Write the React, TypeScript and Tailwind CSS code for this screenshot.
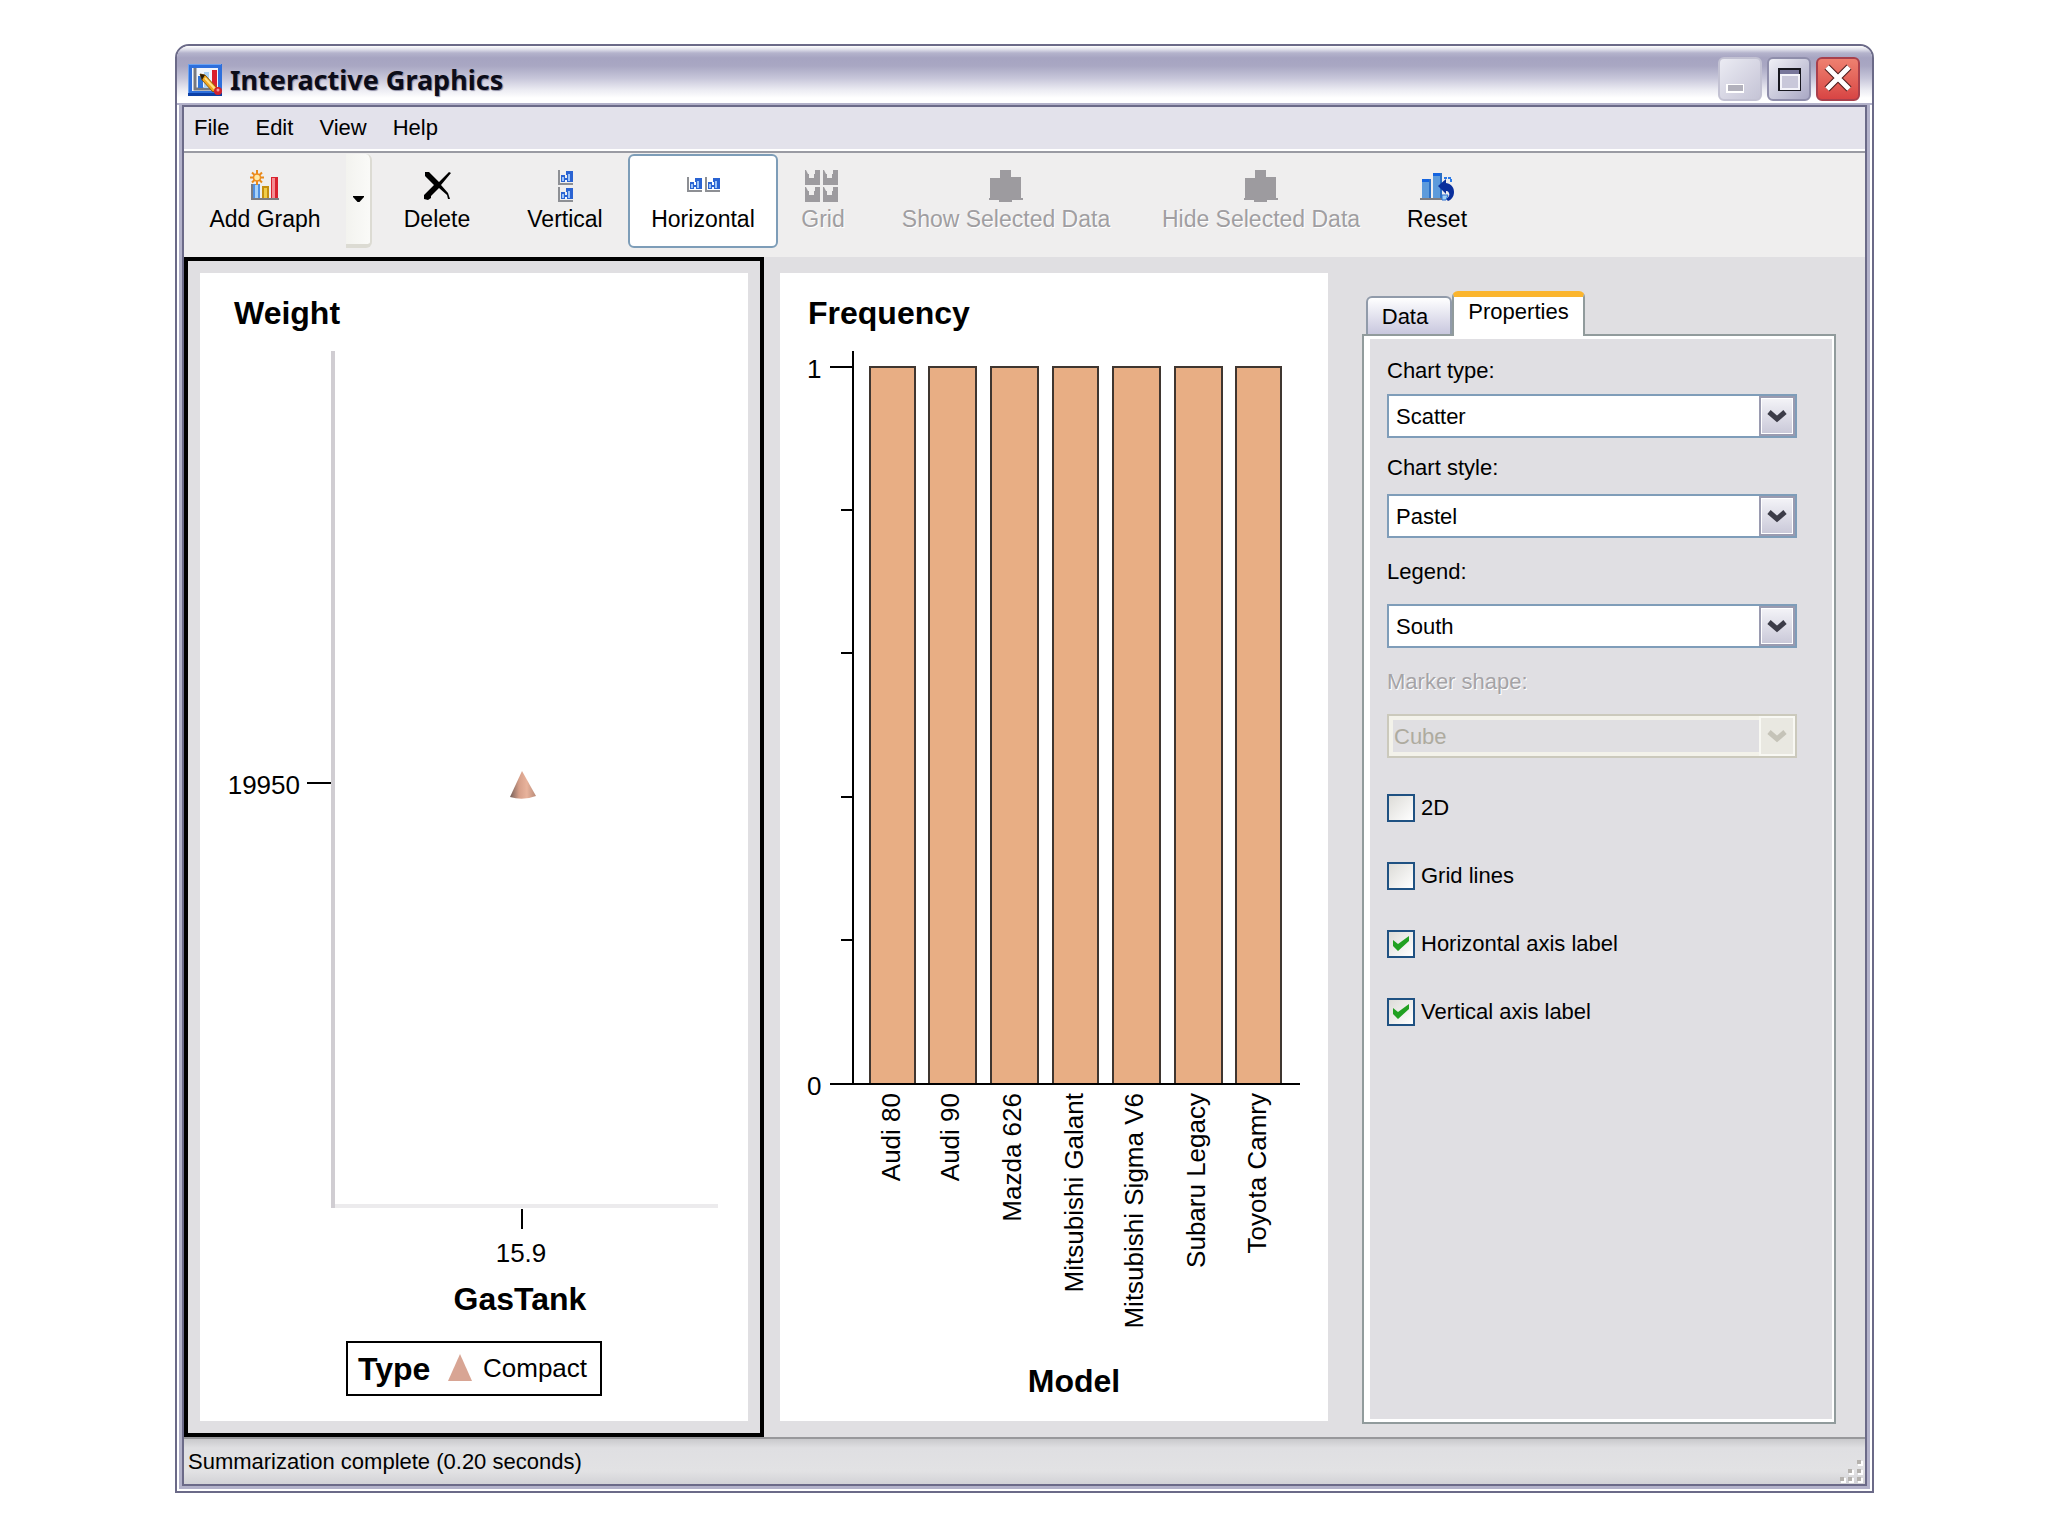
import { useState, type ReactNode } from "react";

const carModels = [
    { name: "Audi 80", x: 89, width: 46 },
    { name: "Audi 90", x: 148, width: 48 },
    { name: "Mazda 626", x: 210, width: 48 },
    { name: "Mitsubishi Galant", x: 272, width: 46 },
    { name: "Mitsubishi Sigma V6", x: 332, width: 48 },
    { name: "Subaru Legacy", x: 394, width: 48 },
    { name: "Toyota Camry", x: 455, width: 46 },
];

/* ---------- icons ---------- */

const AppIcon = () => (
    <svg width="34" height="32" viewBox="0 0 34 32" aria-hidden="true">
        <rect width="34" height="32" fill="#2e6fdc" />
        <path d="M0 31V0H33" fill="none" stroke="#6aa2f2" strokeWidth="2" />
        <path d="M0 31H34" stroke="#0b3fa6" strokeWidth="4" />
        <rect x="4" y="4" width="26" height="23" fill="#f2f6fc" />
        <path d="M7 4V25H28" fill="none" stroke="#77797f" strokeWidth="3" />
        <rect x="10" y="12" width="5" height="12" fill="#2f74d8" />
        <rect x="16" y="8" width="5" height="16" fill="#a9d0f5" />
        <rect x="24" y="6" width="5" height="18" fill="#d9202d" />
        <path d="M12 10l5 1 12 13-4 4-11-12z" fill="#f2a81d" stroke="#8a5a10" strokeWidth="1" />
        <path d="M12 10l5 1-3 5z" fill="#2a1c0c" />
        <path d="M17 14l10 11" stroke="#ffe08a" strokeWidth="2" />
        <circle cx="30" cy="27" r="4" fill="#d3222c" />
        <circle cx="30" cy="26" r="1.5" fill="#f59aa0" />
    </svg>
);

const AddGraphIcon = () => (
    <svg width="30" height="32" viewBox="0 0 30 32" aria-hidden="true">
        <rect x="3" y="14" width="7" height="15" fill="#4f8fe0" />
        <rect x="5" y="15" width="3" height="14" fill="#a8d2f8" />
        <rect x="12" y="16" width="7" height="13" fill="#c58f10" />
        <rect x="14" y="18" width="3" height="11" fill="#f0cd4a" />
        <rect x="21" y="7" width="7" height="22" fill="#d9232f" />
        <rect x="22" y="8" width="3" height="20" fill="#f58c92" />
        <path d="M2 14V29H29" fill="none" stroke="#7c7c80" strokeWidth="2" />
        <path d="M7 0V15M0 7.500H14M2 2.500L12 12.500M12 2.500L2 12.500" stroke="#e88a1a" strokeWidth="2" />
        <circle cx="7" cy="7.500" r="3.500" fill="#ffe9a6" stroke="#ee8b1c" strokeWidth="1.500" />
    </svg>
);

const DeleteIcon = () => (
    <svg width="30" height="32" viewBox="0 0 30 32" aria-hidden="true">
        <path d="M3 2h4l10 10 10-10 2 1-10 12 7 8 2 6-2 0-1-4-8-7-8 8 0 2-3 2-4-1 0-4 10-10-9-9z" fill="#000" />
    </svg>
);

interface MiniChartProps {
    x: number,
    y: number,
    disabled?: boolean
}

const MiniChart = ({ x, y, disabled }: MiniChartProps) => (
    <g transform={`translate(${x} ${y})`}>
        {disabled ? (
            <path d="M0 0h1l2 4h1v4h5V4h1V0h5v15H0z" fill="#9d9b9f" />
        ) : (
            <>
                <path d="M3 5h4v3h2V5H8V1h7v11H3z" fill="#2a63d2" />
                <path d="M5 7v4M11 4v7" stroke="#9cc4f8" strokeWidth="2" />
                <path d="M8 10v2" stroke="#eef5ff" strokeWidth="2" />
                <path d="M1 0V14H15" fill="none" stroke="#8d8f94" strokeWidth="2" />
            </>
        )}
    </g>
);

const VerticalIcon = () => (
    <svg width="15" height="32" viewBox="0 0 15 32" aria-hidden="true">
        <MiniChart x={0} y={0} />
        <MiniChart x={0} y={17} />
    </svg>
);

const HorizontalIcon = () => (
    <svg width="33" height="32" viewBox="0 0 33 32" aria-hidden="true">
        <MiniChart x={0} y={7} />
        <MiniChart x={18} y={7} />
    </svg>
);

const GridIcon = () => (
    <svg width="37" height="32" viewBox="0 0 37 32" aria-hidden="true">
        <MiniChart x={0} y={0} disabled />
        <MiniChart x={18} y={0} disabled />
        <MiniChart x={0} y={17} disabled />
        <MiniChart x={18} y={17} disabled />
    </svg>
);

const SelectedDataIcon = () => (
    <svg width="34" height="32" viewBox="0 0 34 32" aria-hidden="true">
        <path d="M11 0h11v7h10v21h2v2H23v2H10v-2H0v-2h1V8h10z" fill="#9d9b9f" />
    </svg>
);

const ResetIcon = () => (
    <svg width="35" height="32" viewBox="0 0 35 32" aria-hidden="true">
        <rect x="2" y="9" width="9" height="20" fill="#5d9bdc" />
        <rect x="2" y="9" width="9" height="3" fill="#1464e0" />
        <rect x="13" y="3" width="9" height="26" fill="#5d9bdc" />
        <rect x="13" y="3" width="9" height="3" fill="#1464e0" />
        <path d="M10 9v20M21 3v26" stroke="#2b6fc4" strokeWidth="2" />
        <path d="M0 29h22" stroke="#7d7d82" strokeWidth="2" />
        <path d="M24 8h7v5" fill="none" stroke="#2c7be8" strokeWidth="2" strokeDasharray="3 1" />
        <path d="M18 16l8-7v4c6 1 8 5 8 9 0 5-3 8-6 9l-2-2c3-2 4-4 3-6-1-2-2-2-3-2v3z" fill="#0a2f9c" />
        <path d="M22 25h6l-2 5h-4z" fill="#9fd0f5" stroke="#2c6fd0" strokeWidth="1" />
    </svg>
);

/* ---------- toolbar ---------- */

interface ToolButtonProps {
    icon: ReactNode,
    label: string,
    width: string,
    active?: boolean,
    disabled?: boolean
}

const ToolButton = ({ icon, label, width, active, disabled }: ToolButtonProps) => (
    <button
        disabled={disabled}
        className={`${width} flex h-[94px] shrink-0 flex-col items-center gap-[3px] rounded-md border-2 pt-3.5 whitespace-nowrap ${
            active ? "border-[#7d9db8] bg-white" : "border-transparent"
        } ${disabled ? "text-[#a09ea1] [text-shadow:1px_1px_0_#fff]" : ""}`}
    >
        {icon}
        <span className="text-[23px] leading-7">{label}</span>
    </button>
);

const Toolbar = () => (
    <div className="flex h-[106px] items-start border-t-2 border-[#9a9ba3] bg-[#efeeee] pt-px">
        <ToolButton icon={<AddGraphIcon />} label="Add Graph" width="w-[162px]" />
        <button
            aria-label="More graph types"
            className="flex h-[94px] w-[26px] shrink-0 items-center justify-center rounded-r-md border-r-2 border-b-4 border-[#dcdbd3] bg-linear-to-r from-[#f3f3ef] to-[#fafaf8]"
        >
            <svg width="11" height="6" viewBox="0 0 11 6" aria-hidden="true">
                <path d="M0 0h11v1L6.500 6h-2L0 1z" fill="#000" />
            </svg>
        </button>
        <ToolButton icon={<DeleteIcon />} label="Delete" width="w-[130px]" />
        <ToolButton icon={<VerticalIcon />} label="Vertical" width="w-[126px]" />
        <ToolButton icon={<HorizontalIcon />} label="Horizontal" width="w-[150px]" active />
        <ToolButton icon={<GridIcon />} label="Grid" width="w-[90px]" disabled />
        <ToolButton icon={<SelectedDataIcon />} label="Show Selected Data" width="w-[276px]" disabled />
        <ToolButton icon={<SelectedDataIcon />} label="Hide Selected Data" width="w-[234px]" disabled />
        <ToolButton icon={<ResetIcon />} label="Reset" width="w-[118px]" />
    </div>
);

/* ---------- charts ---------- */

const ScatterChart = () => (
    <svg viewBox="0 -1 548 1148" className="block h-auto w-full bg-white" role="img" aria-label="Weight by GasTank">
        <defs>
            <linearGradient id="cone" x1="0" x2="1" y1="0" y2="0">
                <stop offset="0" stopColor="#75605a" />
                <stop offset="0.350" stopColor="#d69f89" />
                <stop offset="0.650" stopColor="#e8b39c" />
                <stop offset="1" stopColor="#b98b78" />
            </linearGradient>
        </defs>
        <text x="34" y="50" fontSize="32" fontWeight="700">Weight</text>
        <path d="M134 932H518" stroke="#ecebed" strokeWidth="4" />
        <path d="M133 77V934" stroke="#d0cdd2" strokeWidth="4" />
        <path d="M107 509H131" stroke="#000" strokeWidth="2" />
        <path d="M322 935V955" stroke="#000" strokeWidth="2" />
        <text x="100" y="520" fontSize="26" textAnchor="end">19950</text>
        <text x="321" y="988" fontSize="26" textAnchor="middle">15.9</text>
        <path d="M322 497L336 522Q323 527 310 523z" fill="url(#cone)" />
        <text x="320" y="1036" fontSize="32" fontWeight="700" textAnchor="middle">GasTank</text>
        <rect x="147" y="1068" width="254" height="53" fill="#fff" stroke="#000" strokeWidth="2" />
        <text x="158" y="1106" fontSize="32" fontWeight="700">Type</text>
        <path d="M260 1080L272 1107H248z" fill="#d8a594" />
        <text x="283" y="1103" fontSize="26">Compact</text>
    </svg>
);

const BarChart = () => (
    <svg viewBox="0 -1 548 1148" className="block h-auto w-full bg-white" role="img" aria-label="Frequency by Model">
        <text x="28" y="50" fontSize="32" fontWeight="700">Frequency</text>
        <text x="27" y="104" fontSize="26">1</text>
        <text x="27" y="821" fontSize="26">0</text>
        <path d="M73 77V810M50 93H73M61 236H73M61 379H73M61 523H73M61 666H73" stroke="#000" strokeWidth="2" />
        {carModels.map((car) => (
            <g key={car.name}>
                <rect x={car.x + 1} y="93" width={car.width - 1} height="717" fill="#e8ae84" stroke="#3f3630" strokeWidth="2" />
                <text
                    x="-819"
                    y={car.x + 31}
                    fontSize="26"
                    textAnchor="end"
                    transform="rotate(-90)"
                >
                    {car.name}
                </text>
            </g>
        ))}
        <path d="M50 810H520" stroke="#000" strokeWidth="2" />
        <text x="294" y="1118" fontSize="32" fontWeight="700" textAnchor="middle">Model</text>
    </svg>
);

/* ---------- properties panel ---------- */

interface SelectFieldProps {
    id: string,
    label: string,
    options: string[],
    spacing: string,
    disabled?: boolean
}

const SelectField = ({ id, label, options, spacing, disabled }: SelectFieldProps) => (
    <div className={`flex flex-col ${spacing}`}>
        <label htmlFor={id} className={`self-start leading-7 ${disabled ? "text-[#a5a3a6] [text-shadow:1px_1px_0_#fff]" : ""}`}>
            {label}
        </label>
        <div className="relative h-11">
            <select
                id={id}
                disabled={disabled}
                className={`h-full w-full appearance-none border-2 pr-10 ${
                    disabled
                        ? "border-[#cbc9bc] bg-[#e0dfe2] pl-[5px] text-[#aeab9f] opacity-100 [box-shadow:inset_0_0_0_4px_#f3f2ea]"
                        : "border-[#7f9db9] bg-white pl-[7px] text-black"
                }`}
            >
                {options.map((option) => <option key={option}>{option}</option>)}
            </select>
            <span
                className={`pointer-events-none absolute top-0.5 right-0.5 bottom-0.5 flex w-9 items-center justify-center border-2 ${
                    disabled
                        ? "border-[#f8f8f3] bg-[#e9e8e1]"
                        : "border-[#9a9bb0] bg-linear-to-b from-[#f4f4f8] to-[#c9c8d8] [box-shadow:inset_0_0_0_1px_#fff]"
                }`}
            >
                <svg width="20" height="14" viewBox="0 0 20 14" aria-hidden="true">
                    <path d="M2 3L10 10L18 3" fill="none" stroke={disabled ? "#c5c3b8" : "#3c3c48"} strokeWidth="5" />
                </svg>
            </span>
        </div>
    </div>
);

interface CheckFieldProps {
    label: string,
    initial: boolean
}

const CheckField = ({ label, initial }: CheckFieldProps) => {

    const [checked, setChecked] = useState(initial);

    return (
        <label className="flex h-7 items-center gap-1.5 self-start leading-7">
            <span className="relative flex h-7 w-7">
                <input
                    type="checkbox"
                    checked={checked}
                    onChange={() => setChecked(!checked)}
                    className="h-7 w-7 appearance-none border-2 border-[#1f5182] bg-linear-to-br from-[#dddcd8] to-white"
                />
                {checked && (
                    <svg className="pointer-events-none absolute inset-0" width="28" height="28" viewBox="0 0 28 28" aria-hidden="true">
                        <path d="M6 10l5 4L22 6v5L11 21 6 16z" fill="#21a121" />
                    </svg>
                )}
            </span>
            {label}
        </label>
    );
};

const SidePanel = () => (
    <div className="flex w-[521px] shrink-0 flex-col pt-[34px] pr-[29px] pb-[13px] pl-[18px]">
        <div className="z-1 -mb-0.5 flex items-end pl-1" role="tablist">
            <button
                role="tab"
                aria-selected="false"
                className="mb-0.5 h-[38px] w-[86px] rounded-t-md border-2 border-b-0 border-[#919baa] bg-linear-to-b from-white to-[#c8c7de] pr-2"
            >
                Data
            </button>
            <button
                role="tab"
                aria-selected="true"
                className="h-[45px] w-[133px] rounded-t-md border-x-2 border-t-[6px] border-x-[#919b9c] border-t-[#fbb52d] bg-white pb-2.5 leading-7"
            >
                Properties
            </button>
        </div>
        <div className="grow border-2 border-[#919b9c] bg-white pt-[3px] pr-0.5 pb-[3px] pl-1.5" role="tabpanel">
            <div className="flex h-full flex-col bg-[#e0dfe3] pt-[18px] pr-[35px] pl-[17px]">
                <SelectField id="chart-type" label="Chart type:" options={["Scatter", "Bar"]} spacing="gap-[9px]" />
                <SelectField id="chart-style" label="Chart style:" options={["Pastel", "Classic"]} spacing="mt-4 gap-3" />
                <SelectField id="legend" label="Legend:" options={["South", "North"]} spacing="mt-5 gap-[18px]" />
                <SelectField id="marker-shape" label="Marker shape:" options={["Cube"]} spacing="mt-5 gap-[18px]" disabled />
                <div className="mt-9 flex flex-col gap-10">
                    <CheckField label="2D" initial={false} />
                    <CheckField label="Grid lines" initial={false} />
                    <CheckField label="Horizontal axis label" initial={true} />
                    <CheckField label="Vertical axis label" initial={true} />
                </div>
            </div>
        </div>
    </div>
);

/* ---------- window ---------- */

const TitleBar = () => (
    <div className="flex h-[59px] items-start justify-between rounded-t-xl border-b-2 border-[#b3b2ca] bg-[linear-gradient(#fff_0px,#d9d9e6_4px,#b4b3cc_7px,#a6a4c1_12px,#a9a7c3_20px,#c6c5d9_32px,#ececf3_44px,#fff_52px)] pr-3 pl-[11px]">
        <div className="flex items-center gap-2 pt-[18px]">
            <AppIcon />
            <h1 className="font-['Noto_Sans','Open_Sans',sans-serif] text-[27px] leading-8 font-bold text-[#0c0c18] [text-shadow:1px_1px_1px_#8d8ca3]">
                Interactive Graphics
            </h1>
        </div>
        <div className="flex gap-[5px] pt-[11px]">
            <button aria-label="Minimize" className="h-11 w-11 rounded-md border-2 border-[#c3c2d3] bg-linear-to-br from-[#ebebf3] to-[#c5c4d6]">
                <svg width="40" height="40" viewBox="0 0 40 40" aria-hidden="true">
                    <rect x="6" y="25" width="18" height="9" fill="#fff" />
                    <rect x="8" y="26" width="15" height="6" fill="#b2b1bc" />
                </svg>
            </button>
            <button aria-label="Maximize" className="h-11 w-11 rounded-md border-2 border-[#8f8eab] bg-linear-to-br from-[#f0f0f6] to-[#a9a8c4]">
                <svg width="40" height="40" viewBox="0 0 40 40" aria-hidden="true">
                    <rect x="10" y="10" width="21" height="21" fill="#c9c8da" stroke="#17171f" strokeWidth="2" />
                    <rect x="11" y="11" width="19" height="4" fill="#77769a" />
                    <path d="M12 30V16H30V30z" fill="none" stroke="#f4f4fa" strokeWidth="2" />
                </svg>
            </button>
            <button aria-label="Close" className="h-11 w-11 rounded-md border-2 border-[#a8404c] bg-linear-to-b from-[#ee8070] to-[#d84444]">
                <svg width="40" height="40" viewBox="0 0 40 40" aria-hidden="true">
                    <path d="M9 8L31 30M31 8L9 30" stroke="#4b1a1a" strokeWidth="7" />
                    <path d="M9 8L31 30M31 8L9 30" stroke="#fff" strokeWidth="5" />
                </svg>
            </button>
        </div>
    </div>
);

const MenuBar = () => (
    <nav className="flex h-11 items-center gap-[26px] border-b-2 border-white bg-[#e3e2eb] pb-0.5 pl-2.5">
        <button>File</button>
        <button>Edit</button>
        <button>View</button>
        <button>Help</button>
    </nav>
);

const StatusBar = () => (
    <footer className="flex h-[47px] items-center justify-between border-t-2 border-[#98989b] bg-[linear-gradient(#c9c9cc_0px,#dfdfe2_9px,#e2e2e4_32px,#d2d2d6_45px)] pl-1">
        <span>Summarization complete (0.20 seconds)</span>
        <svg className="self-end" width="26" height="26" viewBox="0 0 26 26" aria-hidden="true">
            <path d="M19 3h5v5h-5zM10 12h5v5h-5zM19 12h5v5h-5zM2 20h5v5H2zM10 20h5v5h-5zM19 20h5v5h-5z" fill="#fff" />
            <path d="M18 2h4v4h-4zM9 11h4v4H9zM18 11h4v4h-4zM1 19h4v4H1zM9 19h4v4H9zM18 19h4v4h-4z" fill="#b5b2ae" />
        </svg>
    </footer>
);

const App = () => {
    return (
        <div className="min-h-screen bg-white pt-11 pr-[174px] pl-[175px] font-['Liberation_Sans',Arial,sans-serif] text-[22px] text-black">
            <main className="rounded-t-[14px] border-2 border-[#6b6a88] bg-white">
                <TitleBar />
                <div className="border-2 border-t-0 border-white">
                    <div className="border-3 border-t-0 border-[#b3b2ca]">
                        <div className="border-2 border-[#6b6a88] bg-[#e0dfe2]">
                            <MenuBar />
                            <Toolbar />
                            <div className="flex">
                                <section className="flex-1 border-4 border-black p-3">
                                    <ScatterChart />
                                </section>
                                <section className="flex-1 border-4 border-transparent p-3">
                                    <BarChart />
                                </section>
                                <SidePanel />
                            </div>
                            <StatusBar />
                        </div>
                    </div>
                </div>
            </main>
        </div>
    );
};

export default App;
